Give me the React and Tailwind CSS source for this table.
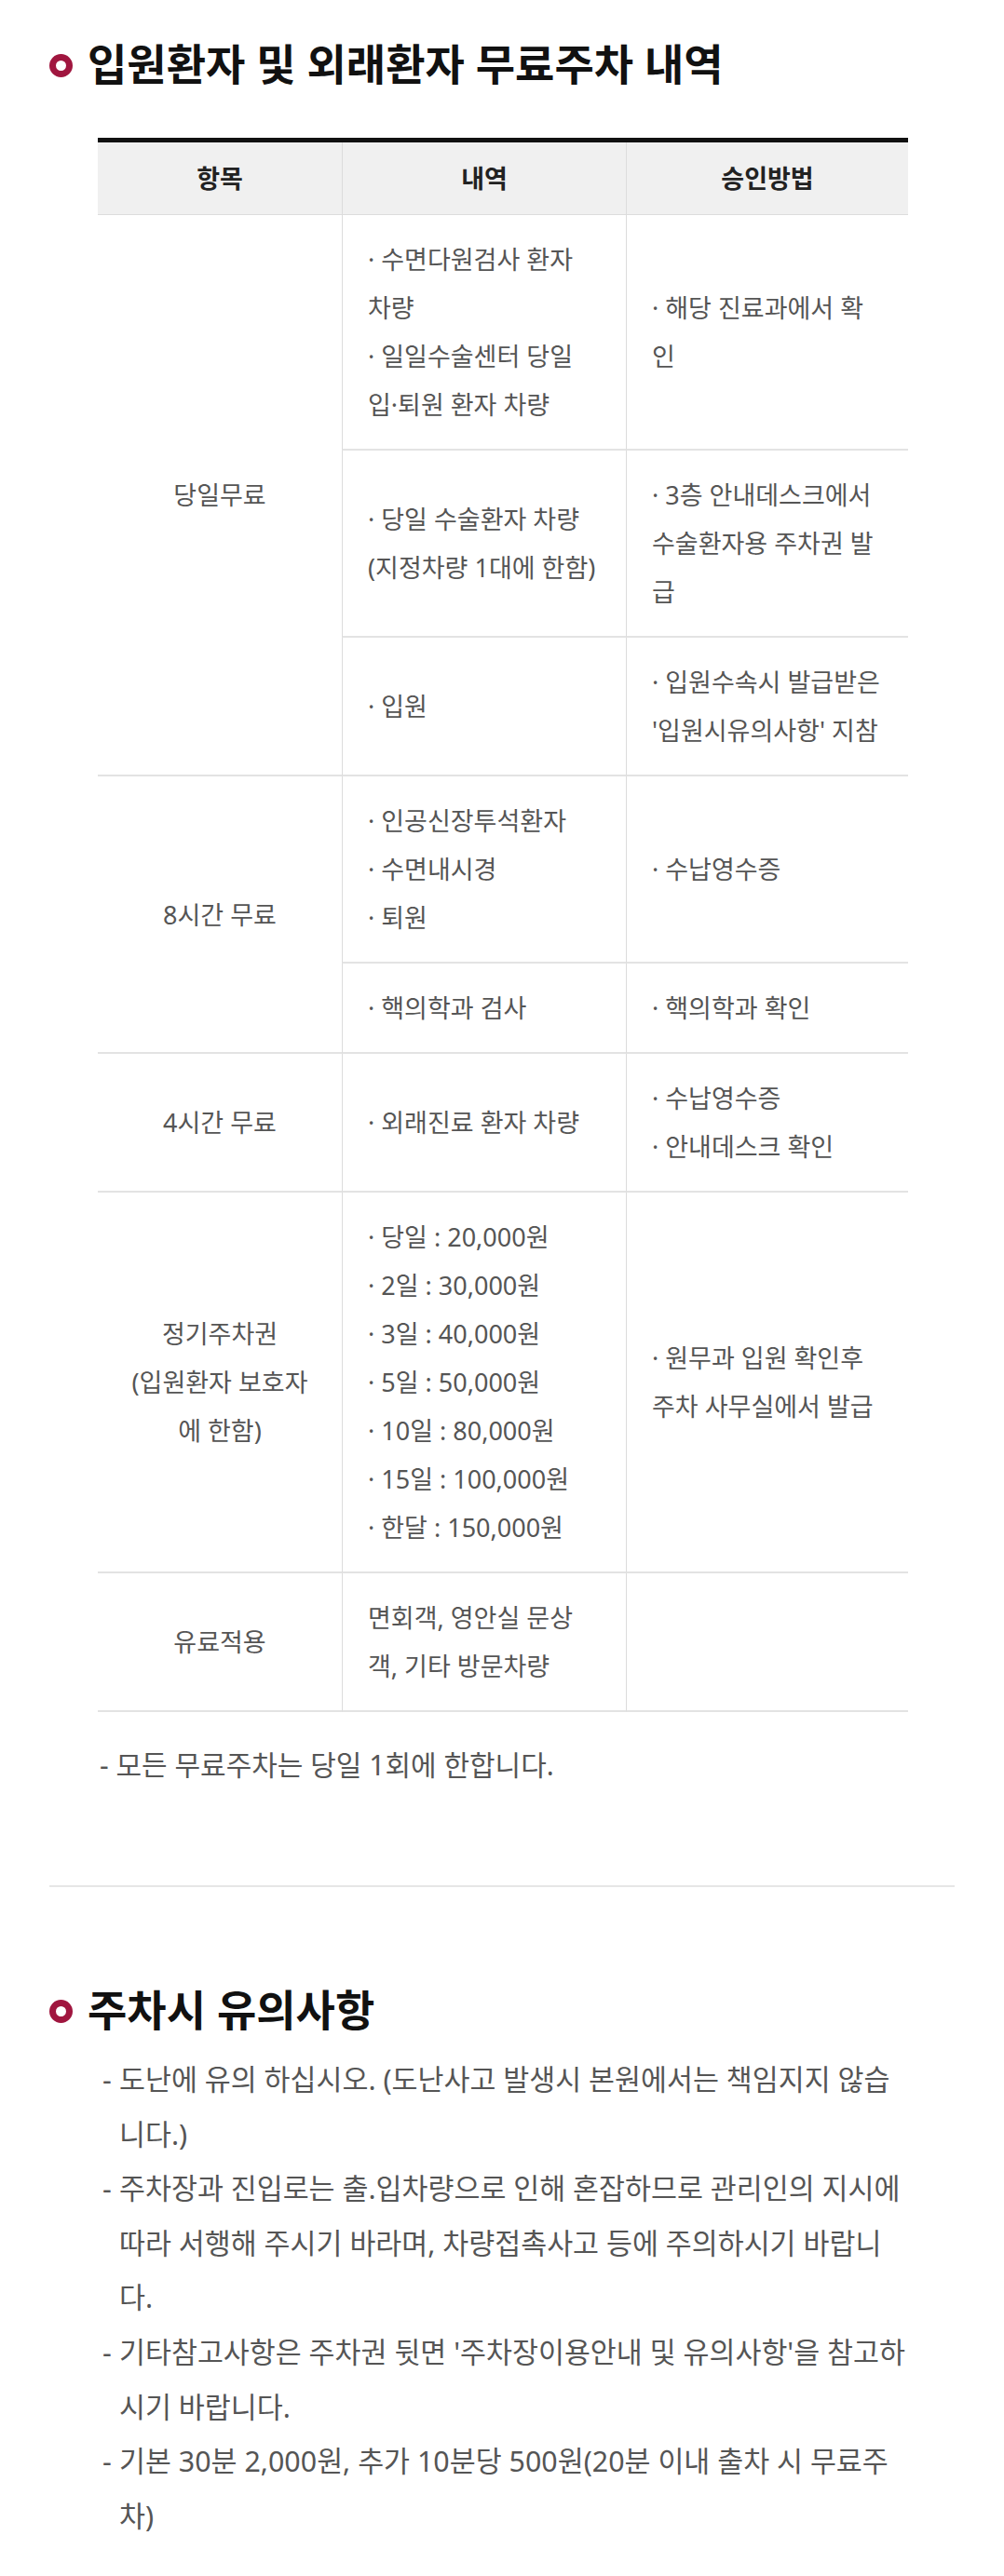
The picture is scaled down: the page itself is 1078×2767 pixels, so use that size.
import React from "react";

const groups = [
  {
    label: ["당일무료"],
    rows: [
      {
        a: ["· 수면다원검사 환자", "차량", "· 일일수술센터 당일", "입·퇴원 환자 차량"],
        b: ["· 해당 진료과에서 확", "인"],
      },
      {
        a: ["· 당일 수술환자 차량", "(지정차량 1대에 한함)"],
        b: ["· 3층 안내데스크에서", "수술환자용 주차권 발", "급"],
      },
      {
        a: ["· 입원"],
        b: ["· 입원수속시 발급받은", "'입원시유의사항' 지참"],
      },
    ],
  },
  {
    label: ["8시간 무료"],
    rows: [
      { a: ["· 인공신장투석환자", "· 수면내시경", "· 퇴원"], b: ["· 수납영수증"] },
      { a: ["· 핵의학과 검사"], b: ["· 핵의학과 확인"] },
    ],
  },
  {
    label: ["4시간 무료"],
    rows: [{ a: ["· 외래진료 환자 차량"], b: ["· 수납영수증", "· 안내데스크 확인"] }],
  },
  {
    label: ["정기주차권", "(입원환자 보호자", "에 한함)"],
    rows: [
      {
        a: [
          "· 당일 : 20,000원",
          "· 2일 : 30,000원",
          "· 3일 : 40,000원",
          "· 5일 : 50,000원",
          "· 10일 : 80,000원",
          "· 15일 : 100,000원",
          "· 한달 : 150,000원",
        ],
        b: ["· 원무과 입원 확인후", "주차 사무실에서 발급"],
      },
    ],
  },
  {
    label: ["유료적용"],
    rows: [{ a: ["면회객, 영안실 문상", "객, 기타 방문차량"], b: [] }],
  },
];

const notes = [
  ["도난에 유의 하십시오. (도난사고 발생시 본원에서는 책임지지 않습", "니다.)"],
  [
    "주차장과 진입로는 출.입차량으로 인해 혼잡하므로 관리인의 지시에",
    "따라 서행해 주시기 바라며, 차량접촉사고 등에 주의하시기 바랍니",
    "다.",
  ],
  ["기타참고사항은 주차권 뒷면 '주차장이용안내 및 유의사항'을 참고하", "시기 바랍니다."],
  ["기본 30분 2,000원, 추가 10분당 500원(20분 이내 출차 시 무료주", "차)"],
];

function Lines({ lines }) {
  return (
    <>
      {lines.map((l, i) => (
        <div key={i} className="whitespace-nowrap">
          {l}
        </div>
      ))}
    </>
  );
}

function Title({ text }) {
  return (
    <div className="flex items-center gap-[16px]">
      <span className="block w-[25px] h-[25px] rounded-full border-[7px] border-[#a0163f] shrink-0 translate-y-[2px]" />
      <h2 className="text-[46px] leading-[60px] font-bold text-[#111]">{text}</h2>
    </div>
  );
}

export default function App() {
  return (
    <div className="w-[1078px] bg-white font-['Noto_Sans','Noto_Sans_CJK_KR',sans-serif] text-[#555] px-[53px] pt-[38px] pb-[33px]">
      <Title text="입원환자 및 외래환자 무료주차 내역" />

      <table className="ml-[52px] mt-[50px] w-[870px] table-fixed border-separate border-spacing-0 border-t-[5px] border-[#111] text-[27px] leading-[52px]">
        <colgroup>
          <col className="w-[262px]" />
          <col className="w-[305px]" />
          <col className="w-[303px]" />
        </colgroup>
        <thead>
          <tr className="bg-[#f0f0f0] text-[#222]">
            <th className="h-[78px] font-bold text-center border-b border-[#dcdcdc]">항목</th>
            <th className="h-[78px] font-bold text-center border-b border-l border-[#dcdcdc]">내역</th>
            <th className="h-[78px] font-bold text-center border-b border-l border-[#dcdcdc]">승인방법</th>
          </tr>
        </thead>
        <tbody>
          {groups.map((g, gi) =>
            g.rows.map((r, ri) => (
              <tr key={gi + "-" + ri}>
                {ri === 0 && (
                  <td
                    rowSpan={g.rows.length}
                    className="text-center align-middle border-b-2 border-[#e3e3e3] pt-[22px] pb-[21px]"
                  >
                    <Lines lines={g.label} />
                  </td>
                )}
                <td className="align-middle border-b-2 border-l border-b-[#e3e3e3] border-l-[#dcdcdc] pt-[22px] pb-[21px] pl-[27px] pr-[6px]">
                  <Lines lines={r.a} />
                </td>
                <td className="align-middle border-b-2 border-l border-b-[#e3e3e3] border-l-[#dcdcdc] pt-[22px] pb-[21px] pl-[27px] pr-[6px]">
                  <Lines lines={r.b} />
                </td>
              </tr>
            ))
          )}
        </tbody>
      </table>

      <p className="ml-[54px] mt-[28px] text-[30px] leading-[58px]">- 모든 무료주차는 당일 1회에 한합니다.</p>

      <div className="mt-[100px] h-[2px] bg-[#e6e6e6]" />

      <div className="mt-[101px]">
        <Title text="주차시 유의사항" />
      </div>

      <ul className="ml-[57px] mt-[17px] text-[30.4px] leading-[58.6px]">
        {notes.map((n, i) => (
          <li key={i} className="flex">
            <span className="w-[18px] shrink-0">-</span>
            <div>
              <Lines lines={n} />
            </div>
          </li>
        ))}
      </ul>
    </div>
  );
}
